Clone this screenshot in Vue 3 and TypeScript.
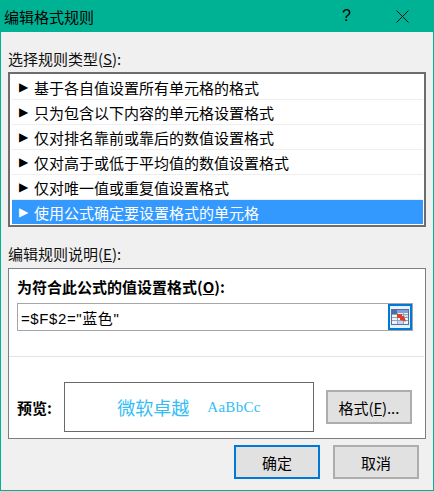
<template>
  <div class="dialog">
    <header class="titlebar">
      <span class="title">编辑格式规则</span>
      <span class="help">?</span>
      <svg class="close" width="13" height="13" viewBox="0 0 13 13">
        <path d="M0.5 0.5L12.5 12.5M12.5 0.5L0.5 12.5" stroke="#111" stroke-width="1" fill="none" />
      </svg>
    </header>
    <main class="body">
      <div class="section-label">选择规则类型(<u>S</u>):</div>
      <ul class="rule-list">
        <li
          v-for="(rule, index) in rules"
          :key="index"
          class="rule"
          :class="{ selected: index === selectedIndex }"
        >
          <span class="arrow">▶</span>
          <span>{{ rule }}</span>
        </li>
      </ul>
      <div class="section-label desc-label">编辑规则说明(<u>E</u>):</div>
      <section class="desc">
        <div class="formula-label">为符合此公式的值设置格式(<u>O</u>):</div>
        <div class="formula-input">
          <span class="formula-text">=$F$2="蓝色"</span>
          <button class="ref-btn">
            <svg width="18" height="16" viewBox="0 0 18 16">
              <rect x="0.5" y="0.5" width="17" height="15" fill="#eef3fa" stroke="#54709c" />
              <rect x="1" y="1" width="16" height="3" fill="#7f9fd8" />
              <rect x="1" y="1" width="5" height="4" fill="#4a6ea8" />
              <path d="M1 5.5H17M1 8.5H17M1 11.5H17M6.5 1V15M12.5 1V15" stroke="#8ea5c6" fill="none" />
              <rect x="13" y="6" width="4" height="2" fill="#cfdcf0" />
              <rect x="7" y="12" width="5" height="3" fill="#c6d4ec" />
              <path d="M6 5H11V7H13L15 12.5L9 11V9H6Z" fill="#d8402a" />
            </svg>
          </button>
        </div>
        <hr class="divider" />
        <div class="preview-row">
          <span class="preview-label">预览:</span>
          <div class="preview-box">
            <span class="sample-cjk">微软卓越</span>
            <span class="sample-latin">AaBbCc</span>
          </div>
          <button class="btn format-btn">格式(<u>F</u>)...</button>
        </div>
      </section>
      <footer class="actions">
        <button class="btn action primary">确定</button>
        <button class="btn action">取消</button>
      </footer>
    </main>
  </div>
</template>

<script setup lang="ts">
const rules: string[] = [
  '基于各自值设置所有单元格的格式',
  '只为包含以下内容的单元格设置格式',
  '仅对排名靠前或靠后的数值设置格式',
  '仅对高于或低于平均值的数值设置格式',
  '仅对唯一值或重复值设置格式',
  '使用公式确定要设置格式的单元格'
]

const selectedIndex = 5
</script>

<style>
html,
body {
  margin: 0;
  background: #f0f0f0;
}
</style>

<style scoped>
.dialog {
  box-sizing: border-box;
  width: 434px;
  height: 491px;
  display: flex;
  flex-direction: column;
  background: #f0f0f0;
  border: solid #00b294;
  border-width: 0 1px 1px 1px;
  font-family: "Noto Sans CJK SC", "Liberation Sans", sans-serif;
  font-size: 15px;
  color: #000;
}

.titlebar {
  height: 32px;
  flex: none;
  display: flex;
  align-items: center;
  background: #00b294;
  margin: 0 -1px;
  padding: 0 25px 0 4px;
}

.title {
  flex: 1;
}

.help {
  margin-right: 45px;
  font-family: "Liberation Sans", sans-serif;
  font-size: 16px;
}

.body {
  flex: 1;
  display: flex;
  flex-direction: column;
  padding: 15px 7px 0 7px;
}

.section-label {
  line-height: 24px;
  height: 25px;
  color: #111;
}

.rule-list {
  list-style: none;
  margin: 0;
  padding: 1px;
  height: 155px;
  box-sizing: border-box;
  background: #fff;
  border: 2px solid #6d6d6d;
}

.rule {
  height: 25px;
  margin-left: 1px;
  display: flex;
  align-items: center;
  gap: 6px;
  padding-left: 7px;
  border-bottom: 1px solid #eeeeee;
  box-sizing: border-box;
}

.rule:last-child {
  height: 24px;
  border-bottom: none;
}

.rule.selected {
  background: #3399ff;
  color: #fff;
}

.arrow {
  font-family: "DejaVu Sans", sans-serif;
  font-size: 12px;
  width: 9px;
}

.desc-label {
  margin-top: 15px;
  height: 24px;
}

.desc {
  margin-top: 2px;
  height: 171px;
  box-sizing: border-box;
  background: #fff;
  border: 1px solid #7a7f87;
  padding: 7px 12px 0 8px;
  display: flex;
  flex-direction: column;
}

.formula-label {
  font-weight: 700;
  line-height: 22px;
}

.formula-input {
  margin-top: 5px;
  height: 28px;
  box-sizing: border-box;
  display: flex;
  align-items: center;
  justify-content: space-between;
  background: #fff;
  border: 1px solid #a6a6a6;
}

.formula-text {
  padding-left: 3px;
  font-family: "Liberation Sans", "Noto Sans CJK SC", sans-serif;
  font-size: 15px;
  letter-spacing: 0.6px;
}

.ref-btn {
  width: 24px;
  height: 26px;
  padding: 0;
  display: flex;
  align-items: center;
  justify-content: center;
  background: #e5f1fb;
  border: 2px solid #0078d7;
}

.divider {
  margin: 25px -11px 0 -8px;
  width: auto;
  height: 1px;
  border: none;
  background: #e3e3e3;
}

.preview-row {
  margin-top: 25px;
  display: flex;
  align-items: center;
}

.preview-label {
  width: 47px;
  flex: none;
  font-weight: 700;
}

.preview-box {
  width: 250px;
  height: 50px;
  box-sizing: border-box;
  flex: none;
  display: flex;
  align-items: center;
  justify-content: center;
  gap: 18px;
  border: 1px solid #696969;
  color: #33bdf5;
}

.sample-cjk {
  font-size: 18px;
}

.sample-latin {
  font-family: "Liberation Serif", serif;
  font-size: 15px;
  letter-spacing: 0.3px;
}

.btn {
  box-sizing: border-box;
  background: #e1e1e1;
  border: 2px solid #adadad;
  font: inherit;
  color: #000;
  padding: 0;
}

.format-btn {
  margin-left: 12px;
  width: 86px;
  height: 34px;
}

.actions {
  margin-top: 6px;
  display: flex;
  gap: 13px;
  justify-content: flex-end;
  padding-right: 7px;
}

.action {
  width: 86px;
  height: 34px;
}

.primary {
  border: 2px solid #0078d7;
}
</style>
